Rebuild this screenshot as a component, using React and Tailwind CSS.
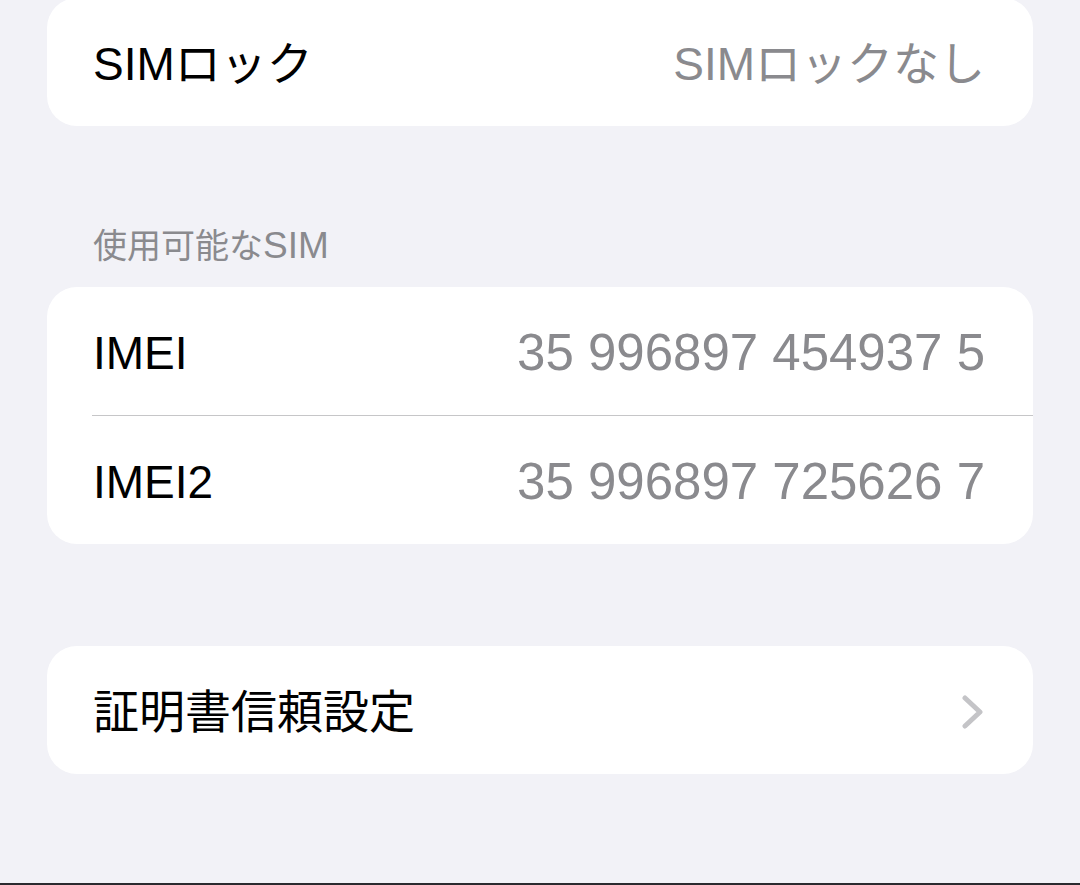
import { Fragment } from "react";

const font = { fontFamily: '"Liberation Sans", "Noto Sans CJK JP", sans-serif' };

function Chevron() {
  return (
    <svg width="24" height="34" viewBox="0 0 24 34" fill="none">
      <polyline points="4,3 19,17 4,31" stroke="#c4c4c7" strokeWidth="5" strokeLinecap="round" strokeLinejoin="round" />
    </svg>
  );
}

function Row({ label, value, digits, chevron }) {
  return (
    <div className="flex h-[128px] items-center justify-between pt-[4px] pl-[46px] pr-[48px]">
      <span className="text-[46px] text-black">{label}</span>
      {value && <span className={`${digits ? "text-[51px]" : "text-[46px]"} text-[#8a8a8e]`}>{value}</span>}
      {chevron && <Chevron />}
    </div>
  );
}

function Card({ rows, className = "" }) {
  return (
    <div className={`mx-[47px] overflow-hidden rounded-[30px] bg-white ${className}`}>
      {rows.map((r, i) => (
        <Fragment key={r.label}>
          {i > 0 && <div className="ml-[45px] h-px bg-[#c6c6c8]" />}
          <Row {...r} />
        </Fragment>
      ))}
    </div>
  );
}

export default function App() {
  return (
    <div className="flex h-[885px] flex-col overflow-hidden bg-[#f2f2f7]" style={font}>
      <Card className="-mt-[2px]" rows={[{ label: "SIMロック", value: "SIMロックなし" }]} />

      <div className="px-[93px] pt-[100px] pb-[21px] text-[34px] leading-[40px] text-[#8a8a8e]">
        使用可能な<span className="text-[37px]">SIM</span>
      </div>

      <Card
        rows={[
          { label: "IMEI", value: "35 996897 454937 5", digits: true },
          { label: "IMEI2", value: "35 996897 725626 7", digits: true },
        ]}
      />

      <Card className="mt-[102px]" rows={[{ label: "証明書信頼設定", chevron: true }]} />

      <div className="mt-auto h-[2px] bg-[#2a2a2e]" />
    </div>
  );
}
